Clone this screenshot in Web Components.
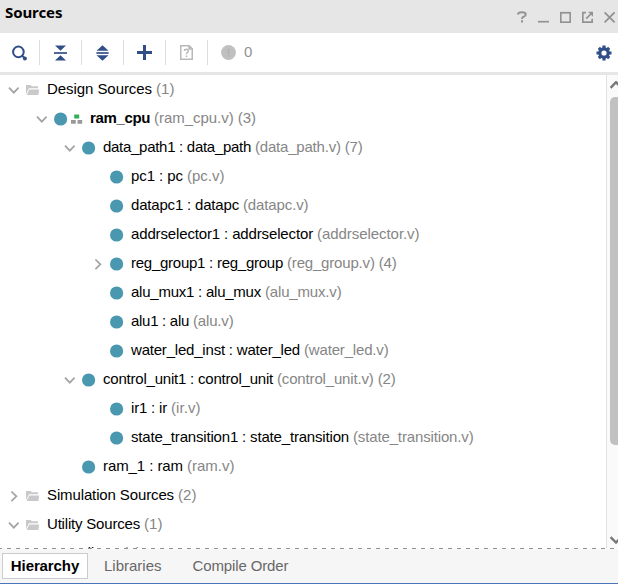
<!DOCTYPE html>
<html lang="en"><head><meta charset="utf-8"><title>Sources</title>
<style>
html,body{margin:0;height:100%;overflow:hidden;background:#fff}
body{font:15px/29px "Liberation Sans",Arial,sans-serif;color:#000}
</style></head><body>
<sources-panel></sources-panel>
<script>
const define=(name,html,init)=>customElements.define(name,class extends HTMLElement{
  constructor(){super();this.attachShadow({mode:'open'}).innerHTML=html;}
  connectedCallback(){if(init)init(this,this.shadowRoot);}
});

const icons={
 search:[16,16,'<circle cx="6.4" cy="6.9" r="5.3" fill="none" stroke="#314f87" stroke-width="2"/><path d="M10 10.5L12 12.4" stroke="#314f87" stroke-width="2"/><circle cx="12.9" cy="13.4" r="2" fill="#314f87"/>'],
 collapse:[13,16,'<path d="M1 .5H12L6.5 5.8ZM1 15.5H12L6.5 10.2Z" fill="#314f87"/><path d="M0 8H13" stroke="#314f87" stroke-width="1.7"/>'],
 expand:[13,16,'<path d="M.5 5.8H12.5L6.5 .3ZM.5 10.2H12.5L6.5 15.7Z" fill="#314f87"/><path d="M.4 8H12.6" stroke="#314f87" stroke-width="1.7"/>'],
 plus:[15,15,'<path d="M0 7.5H15M7.5 0V15" stroke="#314f87" stroke-width="3"/>'],
 missing:[13,15,'<path d="M.75 .75H9.3L12.25 3.7V14.25H.75ZM9 .8V4H12.2" fill="none" stroke="#b9b9b9" stroke-width="1.5"/><path d="M4.4 6Q4.4 4.3 6.4 4.3Q8.4 4.4 8.3 6Q8.3 7 7.3 7.6Q6.4 8.2 6.4 9.3M6.4 10.5V12" fill="none" stroke="#b9b9b9" stroke-width="1.5"/>'],
 alert:[15,15,'<circle cx="7.5" cy="7.5" r="7.4" fill="#c0c0c0"/><path d="M7.5 3.6V8.8M7.5 10V11.6" stroke="#b0b0b0" stroke-width="1.4"/>'],
 gear:[16,16,'<path d="M8 .5V15.5M.5 8H15.5M2.8 2.8L13.2 13.2M13.2 2.8L2.8 13.2" stroke="#314f87" stroke-width="3.2"/><circle cx="8" cy="8" r="5.8" fill="#314f87"/><circle cx="8" cy="8" r="2.6" fill="#fff"/>'],
 help:[10,12,'<path d="M1 3.5Q1.2 1.2 4.9 1.2Q8.7 1.2 8.7 3.5Q8.7 4.8 6.8 5.7Q5 6.5 5 8M5 9.3V11.6" fill="none" stroke="#929292" stroke-width="2"/>'],
 minimize:[11,12,'<path d="M0 10.7H11" stroke="#929292" stroke-width="1.7"/>'],
 maximize:[11,12,'<rect x=".75" y="1.75" width="9.5" height="9.5" fill="none" stroke="#929292" stroke-width="1.7"/>'],
 float:[11,12,'<path d="M4 1.7H.8V11.2H10.2V7.7" fill="none" stroke="#929292" stroke-width="1.7"/><path d="M6 .8H11V5.8Z" fill="#929292"/><path d="M4.2 7.7L8.8 3" stroke="#929292" stroke-width="1.7"/>'],
 close:[12,12,'<path d="M.6 1.3L10.6 11.3M10.6 1.3L.6 11.3" stroke="#929292" stroke-width="1.8"/>'],
 down:[12,8,'<path d="M1 1.7L5.8 6.7L10.6 1.7" fill="none" stroke="#a3a3a3" stroke-width="1.7"/>'],
 right:[8,12,'<path d="M1.4 1.5L6.4 6.3L1.4 11.1" fill="none" stroke="#a3a3a3" stroke-width="1.7"/>'],
 folder:[14,12,'<path d="M0 10V1H4.7L5.7 2.2H12V4.2H3Z" fill="#c9c9c9"/><path d="M3.3 5.4H13.2L12.4 11H.6Z" fill="#c9c9c9"/>'],
 dot:[14,14,'<circle cx="6.6" cy="7" r="6.6" fill="#4a98af"/>'],
 top:[12,10,'<rect x="3.2" y=".5" width="5" height="4" fill="#35ad5b"/><path d="M0 6H4.8V9.8H0ZM6.5 6H11.2V9.8H6.5Z" fill="#999"/>'],
 scrollup:[10,8,'<path d="M.6 6.8L6 1.2L11.4 6.8" fill="none" stroke="#777" stroke-width="2.4"/>'],
 scrolldown:[10,8,'<path d="M.6 1.2L6 6.5L11.4 1.2" fill="none" stroke="#777" stroke-width="2.4"/>']
};
define('ui-icon','<style>:host{display:block;flex:none}svg{display:block}</style>',(el,r)=>{
 const [w,h,body]=icons[el.getAttribute('name')];
 r.innerHTML+=`<svg width="${w}" height="${h}" viewBox="0 0 ${w} ${h}">${body}</svg>`;
});

define('panel-header',`<style>
:host{display:flex;height:33px;background:#e6e6e6;box-sizing:border-box;padding:0 2px 0 5px;justify-content:space-between}
b{font:bold 15px/24px "Noto Sans",sans-serif;letter-spacing:-.1px}
nav{display:flex;gap:11px;padding-top:11px}
</style><b><slot></slot></b><nav><ui-icon name="help"></ui-icon><ui-icon name="minimize"></ui-icon><ui-icon name="maximize"></ui-icon><ui-icon name="float"></ui-icon><ui-icon name="close"></ui-icon></nav>`);

define('tool-bar',`<style>
:host{display:flex;height:39px;align-items:center;border-bottom:3px solid #e6e6e6}
span{display:flex;width:41px;height:25px;border-right:1px solid #dcdcdc;align-items:center;justify-content:center}
span:first-of-type{width:39px}
.n{width:auto;flex:1;border:0;justify-content:flex-start;gap:8px;padding-left:13px;color:#929292}
em{font-style:normal;padding-bottom:2px}
ui-icon[name=gear]{margin-right:6.5px}
</style><span><ui-icon name="search"></ui-icon></span><span><ui-icon name="collapse"></ui-icon></span><span><ui-icon name="expand"></ui-icon></span><span><ui-icon name="plus"></ui-icon></span><span><ui-icon name="missing"></ui-icon></span><span class="n"><ui-icon name="alert"></ui-icon><em>0</em></span><ui-icon name="gear"></ui-icon>`);

// Letter spacing that makes a span's text take up the given width.
const fit=(span,width)=>{
 const n=span.textContent.length||1;
 span.style.letterSpacing=(width-span.getBoundingClientRect().width)/n+'px';
};
define('tree-row',`<style>
:host{display:flex;height:29px;line-height:27px;align-items:center;white-space:pre}
.a{width:12px;margin-right:6px;display:flex;justify-content:center;flex:none}
.i{display:flex;align-items:center;gap:3px;margin-right:7px}
.t,.d{padding-bottom:2px;flex:none}
:host([bold]) .t{font-weight:bold}
.d{color:#868686;margin-left:4px}
</style><span class="a"></span><span class="i"></span><span class="t"></span><span class="d"></span>`,(el,r)=>{
 const g=n=>el.getAttribute(n), q=s=>r.querySelector(s);
 el.style.paddingLeft=8+28*Number(g('level'))+'px';
 if(g('arrow'))q('.a').innerHTML=`<ui-icon name="${g('arrow')}"></ui-icon>`;
 q('.i').innerHTML=g('icons').split(' ').map(n=>`<ui-icon name="${n}"></ui-icon>`).join('');
 q('.t').textContent=g('label');
 q('.d').textContent=g('detail');
 fit(q('.t'),Number(g('lw')));
 fit(q('.d'),Number(g('dw')));
});

define('scroll-bar',`<style>
:host{display:flex;flex-direction:column;width:12px;flex:none;box-sizing:border-box;border-left:1px solid #e2e2e2;background:#fafafa;padding:6px 0 4px 3px;overflow:hidden}
i{display:block;width:14px;height:348px;margin-top:8px;border-radius:5px;background:#c1c1c1}
.s{flex:1}
</style><ui-icon name="scrollup"></ui-icon><i></i><div class="s"></div><ui-icon name="scrolldown"></ui-icon>`);

define('source-tree',`<style>
:host{display:flex;height:473px;overflow:hidden}
main{flex:1;overflow:hidden}
</style><main></main><scroll-bar></scroll-bar>`,(el,r)=>{
 // level, arrow, icons, label, detail, label width, detail width, bold
 const rows=[
 [0,'down','folder','Design Sources','(1)',105,18.5],
 [1,'down','dot top','ram_cpu','(ram_cpu.v) (3)',60,102,1],
 [2,'down','dot','data_path1 : data_path','(data_path.v) (7)',148,107.5],
 [3,'','dot','pc1 : pc','(pc.v)',52,37.5],
 [3,'','dot','datapc1 : datapc','(datapc.v)',108,65.5],
 [3,'','dot','addrselector1 : addrselector','(addrselector.v)',182,102.5],
 [3,'right','dot','reg_group1 : reg_group','(reg_group.v) (4)',152,109.5],
 [3,'','dot','alu_mux1 : alu_mux','(alu_mux.v)',130,76.5],
 [3,'','dot','alu1 : alu','(alu.v)',58,40.5],
 [3,'','dot','water_led_inst : water_led','(water_led.v)',169,84.5],
 [2,'down','dot','control_unit1 : control_unit','(control_unit.v) (2)',170,118.5],
 [3,'','dot','ir1 : ir','(ir.v)',36,29.5],
 [3,'','dot','state_transition1 : state_transition','(state_transition.v)',218,120.5],
 [2,'','dot','ram_1 : ram','(ram.v)',80,47.5],
 [0,'right','folder','Simulation Sources','(2)',127,18.5],
 [0,'down','folder','Utility Sources','(1)',93,18.5],
 [1,'','folder','utils_1','(0)',44,18]];
 r.querySelector('main').innerHTML=rows.map(([l,a,i,t,d,lw,dw,b])=>`<tree-row level="${l}" arrow="${a}" icons="${i}" label="${t}" detail="${d}" lw="${lw}" dw="${dw}"${b?' bold':''}></tree-row>`).join('');
});

define('tab-bar',`<style>
:host{display:flex;height:36px;box-sizing:border-box;background:repeating-linear-gradient(90deg,#929292 0 4px,#fff 4px 9px) -2px 0/calc(100% + 9px) 1px no-repeat,#f6f6f6;border-bottom:1px solid #4b76b5;padding:5px 0 0 2px;align-items:flex-start;color:#686868;line-height:25px}
b{box-sizing:border-box;width:86px;height:26px;border:1px solid #ccc;background:#fff;color:#000;text-align:center;line-height:24px;letter-spacing:-.1px}
span{margin-left:16px}
span+span{margin-left:31px;letter-spacing:-.13px}
</style><b>Hierarchy</b><span>Libraries</span><span>Compile Order</span>`);

define('sources-panel',`<style>:host{display:block;height:584px;overflow:hidden}</style>
<panel-header>Sources</panel-header><tool-bar></tool-bar><source-tree></source-tree><tab-bar></tab-bar>`);
</script></body></html>
